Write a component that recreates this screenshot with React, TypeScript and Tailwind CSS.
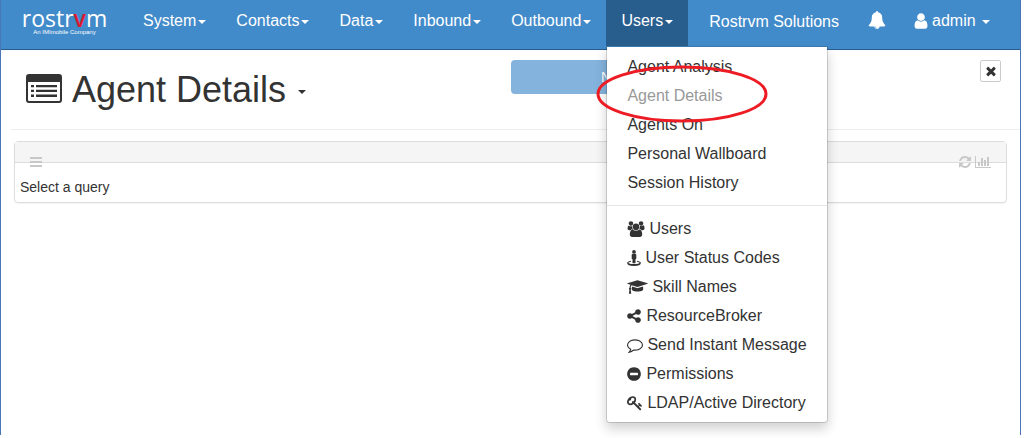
import type { ReactNode } from "react";

type Glyph = { w: number; d: string };

const glyphs: Record<string, Glyph> = {
  bell: {
    w: 1792,
    d: "M912 1696q0-16-16-16-59 0-101.5-42.5t-42.5-101.5q0-16-16-16t-16 16q0 73 51.5 124.5t124.5 51.5q16 0 16-16zm816-288q0 52-38 90t-90 38h-448q0 106-75 181t-181 75-181-75-75-181h-448q-52 0-90-38t-38-90q50-42 91-88t85-119.5 74.5-158.5 50-206 19.5-260q0-152 117-282.5t307-158.5q-8-19-8-39 0-40 28-68t68-28 68 28 28 68q0 20-8 39 190 28 307 158.5t117 282.5q0 139 19.5 260t50 206 74.5 158.5 85 119.5 91 88z",
  },
  user: {
    w: 1792,
    d: "M1536 1399q0 109-62.5 187t-150.5 78h-854q-88 0-150.5-78t-62.5-187q0-85 8.5-160.5t31.5-152 58.5-131 94-89 134.5-34.5q131 128 313 128t313-128q76 0 134.5 34.5t94 89 58.5 131 31.5 152 8.5 160.5zm-256-887q0 159-112.5 271.5t-271.5 112.5-271.5-112.5-112.5-271.5 112.5-271.5 271.5-112.5 271.5 112.5 112.5 271.5z",
  },
  users: {
    w: 2048,
    d: "M657 896q-162 5-265 128h-134q-82 0-138-40.5t-56-118.5q0-353 124-353 6 0 43.5 21t97.5 42.5 119 21.5q67 0 133-23-5 37-5 66 0 159 93 293zm1071 637q0 120-73 189.5t-194 69.5h-874q-121 0-194-69.5t-73-189.5q0-53 3.5-103.5t14-109 26.5-108.5 43-97.5 62-81 85.5-53.5 111.5-20q10 0 43 21.5t73 48 107 48 135 21.5 135-21.5 107-48 73-48 43-21.5q61 0 111.5 20t85.5 53.5 62 81 43 97.5 26.5 108.5 14 109 3.5 103.5zm-1024-1277q0 106-75 181t-181 75-181-75-75-181 75-181 181-75 181 75 75 181zm704 384q0 159-112.5 271.5t-271.5 112.5-271.5-112.5-112.5-271.5 112.5-271.5 271.5-112.5 271.5 112.5 112.5 271.5zm576 225q0 78-56 118.5t-138 40.5h-134q-103-123-265-128 93-134 93-293 0-29-5-66 66 23 133 23 59 0 119-21.5t97.5-42.5 43.5-21q124 0 124 353zm-128-609q0 106-75 181t-181 75-181-75-75-181 75-181 181-75 181 75 75 181z",
  },
  streetView: {
    w: 1536,
    d: "M768 0a210 210 0 0 1 0 420a210 210 0 0 1 0-420zM600 450h336q90 0 90 90v400q0 60-60 60h-30v420q0 60-60 60h-216q-60 0-60-60v-420h-30q-60 0-60-60v-400q0-90 90-90zM420 1190l20 120q-260 50-310 110 60 150 638 150t638-150q-50-60-310-110l20-120q420 80 420 235 0 367-768 367t-768-367q0-155 420-235z",
  },
  graduationCap: {
    w: 2304,
    d: "M1774 836l18 316q4 69-82 128t-235 93.5-323 34.5-323-34.5-235-93.5-82-128l18-316 574 181q22 7 48 7t48-7zm530-324q0 23-22 31l-1120 352q-4 1-10 1t-10-1l-652-206q-43 34-71 111.5t-34 178.5q63 36 63 109 0 69-58 107l58 433q2 14-8 25-9 11-24 11h-192q-15 0-24-11-10-11-8-25l58-433q-58-38-58-107 0-73 65-111 11-207 98-330l-333-104q-22-8-22-31t22-31l1120-352q4-1 10-1t10 1l1120 352q22 8 22 31z",
  },
  share: {
    w: 1792,
    d: "M1344 1024q133 0 226.5 93.5t93.5 226.5-93.5 226.5-226.5 93.5-226.5-93.5-93.5-226.5q0-12 2-34l-360-180q-92 86-218 86-133 0-226.5-93.5t-93.5-226.5 93.5-226.5 226.5-93.5q126 0 218 86l360-180q-2-22-2-34 0-133 93.5-226.5t226.5-93.5 226.5 93.5 93.5 226.5-93.5 226.5-226.5 93.5q-126 0-218-86l-360 180q2 22 2 34t-2 34l360 180q92-86 218-86z",
  },
  comment: {
    w: 1792,
    d: "M896 384q-204 0-381.5 69.5t-282 187.5-104.5 255q0 112 71.5 213.5t201.5 175.5l87 50-27 96q-24 91-70 172 152-63 275-171l43-38 57 6q69 8 130 8 204 0 381.5-69.5t282-187.5 104.5-255-104.5-255-282-187.5-381.5-69.5zm896 512q0 174-120 321.5t-326 233-450 85.5q-70 0-145-8-198 175-460 242-49 14-114 22h-5q-15 0-27-10.5t-16-27.5v-1q-3-4-.5-12t2-10 4.5-9.5l6-9 7-8.5 8-9q7-8 31-34.5t34.5-38 31-39.5 32.5-51 27-59 26-76q-157-89-247.5-220t-90.5-281q0-174 120-321.5t326-233 450-85.5 450 85.5 326 233 120 321.5z",
  },
  minus: {
    w: 1792,
    d: "M1344 960v-128q0-26-19-45t-45-19h-768q-26 0-45 19t-19 45v128q0 26 19 45t45 19h768q26 0 45-19t19-45zm320-64q0 209-103 385.5t-279.5 279.5-385.5 103-385.5-103-279.5-279.5-103-385.5 103-385.5 279.5-279.5 385.5-103 385.5 103 279.5 279.5 103 385.5z",
  },
  key: {
    w: 1792,
    d: "M832 512q0-80-56-136t-136-56-136 56-56 136q0 42 19 83-41-19-83-19-80 0-136 56t-56 136 56 136 136 56 136-56 56-136q0-42-19-83 41 19 83 19 80 0 136-56t56-136zm851 704q0 17-49 66t-66 49q-9 0-28.5-16t-36.5-33-38.5-40-24.5-26l-96 96 220 220q28 28 28 68 0 42-39 81t-81 39q-40 0-68-28l-671-671q-176 131-365 131-163 0-265.5-102.5t-102.5-265.5q0-160 95-313t248-248 313-95q163 0 265.5 102.5t102.5 265.5q0 189-131 365l355 355 96-96q-3-3-26-24.5t-40-38.5-33-36.5-16-28.5q0-17 49-66t66-49q13 0 23 10 6 6 46 44.5t82 79.5 86.5 86 73 78 28.5 41z",
  },
  refresh: {
    w: 1792,
    d: "M1639 1056q0 5-1 7-64 268-268 434.5t-478 166.5q-146 0-282.5-55t-243.5-157l-129 129q-19 19-45 19t-45-19-19-45v-448q0-26 19-45t45-19h448q26 0 45 19t19 45-19 45l-137 137q71 66 161 102t187 36q134 0 250-65t186-179q11-17 53-117 8-23 30-23h192q13 0 22.5 9.5t9.5 22.5zm25-800v448q0 26-19 45t-45 19h-448q-26 0-45-19t-19-45 19-45l138-138q-148-137-349-137-134 0-250 65t-186 179q-11 17-53 117-8 23-30 23h-199q-13 0-22.5-9.5t-9.5-22.5v-7q65-268 270-434.5t480-166.5q146 0 284 55.5t245 156.5l130-129q19-19 45-19t45 19 19 45z",
  },
  chart: {
    w: 2048,
    d: "M640 896v512h-256v-512h256zm384-512v1024h-256v-1024h256zm1024 1152v128h-2048v-1536h128v1408h1920zm-640-896v768h-256v-768h256zm384-384v1152h-256v-1152h256z",
  },
  times: {
    w: 1792,
    d: "M1490 1322q0 40-28 68l-136 136q-28 28-68 28t-68-28l-294-294-294 294q-28 28-68 28t-68-28l-136-136q-28-28-28-68t28-68l294-294-294-294q-28-28-28-68t28-68l136-136q28-28 68-28t68 28l294 294 294-294q28-28 68-28t68 28l136 136q28 28 28 68t-28 68l-294 294 294 294q28 28 28 68z",
  },
};

function Icon({ name, className }: { name: string; className: string }) {
  const g = glyphs[name];
  return (
    <svg viewBox={`0 0 ${g.w} 1792`} className={`shrink-0 fill-current ${className}`} aria-hidden="true">
      <path d={g.d} />
    </svg>
  );
}

function Caret() {
  return (
    <svg viewBox="0 0 8 4" className="mt-0.5 w-2 h-1 shrink-0 fill-current" aria-hidden="true">
      <path d="M0 0h8L4 4z" />
    </svg>
  );
}

const reports = [
  { label: "Agent Analysis" },
  { label: "Agent Details", current: true },
  { label: "Agents On" },
  { label: "Personal Wallboard" },
  { label: "Session History" },
];

const admin = [
  { label: "Users", icon: "users", size: "w-[18px] h-4" },
  { label: "User Status Codes", icon: "streetView", size: "w-[14px] h-4" },
  { label: "Skill Names", icon: "graduationCap", size: "w-[21px] h-4" },
  { label: "ResourceBroker", icon: "share", size: "w-4 h-4 -ml-px" },
  { label: "Send Instant Message", icon: "comment", size: "w-4 h-4" },
  { label: "Permissions", icon: "minus", size: "w-4 h-4 -ml-px" },
  { label: "LDAP/Active Directory", icon: "key", size: "w-4 h-4" },
];

function MenuLink({ children, current }: { children: ReactNode; current?: boolean }) {
  return (
    <a
      href="#"
      className={`flex items-center gap-1 px-5 py-[3px] leading-[23px] whitespace-nowrap ${current ? "text-[#999]" : "text-[#333]"}`}
    >
      {children}
    </a>
  );
}

function UsersMenu() {
  return (
    <div className="absolute left-0 top-full z-10 w-[222px] rounded-b border border-black/15 border-t-[#3a7ab3] bg-white bg-clip-padding py-[5px] shadow-[0_6px_12px_rgba(0,0,0,0.18)]">
      <ul>
        {reports.map((r) => (
          <li key={r.label} className="relative">
            <MenuLink current={r.current}>{r.label}</MenuLink>
            {r.current && (
              <svg
                viewBox="0 0 172 58"
                className="absolute -left-[11px] -top-4 z-10 w-[172px] h-[58px] pointer-events-none"
                aria-hidden="true"
              >
                <ellipse cx="86" cy="29" rx="84" ry="27" fill="none" stroke="#ed1c24" strokeWidth="3" />
              </svg>
            )}
          </li>
        ))}
      </ul>
      <hr className="my-2 border-[#e5e5e5]" />
      <ul>
        {admin.map((a) => (
          <li key={a.label}>
            <MenuLink>
              <Icon name={a.icon} className={a.size} />
              {a.label}
            </MenuLink>
          </li>
        ))}
      </ul>
    </div>
  );
}

function Navbar() {
  return (
    <nav className="flex items-start h-[50px] border-b border-[#285e8e] bg-[#428bca] text-white">
      <a href="#" className="flex flex-col items-center w-[83px] ml-[22px] mr-[22px] pt-2">
        <span className="font-['Open_Sans',sans-serif] text-[23px] leading-5">
          rostr<span className="font-semibold text-[#e0182d]">v</span>m
        </span>
        <span className="text-[6px] leading-[8px] whitespace-nowrap">An IMImobile Company</span>
      </a>
      {["System", "Contacts", "Data", "Inbound", "Outbound"].map((label) => (
        <button key={label} type="button" className="flex items-center gap-0.5 h-[46px] px-[15px] pb-[5px]">
          {label}
          <Caret />
        </button>
      ))}
      <div className="relative">
        <button
          type="button"
          aria-expanded="true"
          className="flex items-center gap-0.5 h-[46px] px-[15px] pb-[5px] bg-[#285e8e]"
        >
          Users
          <Caret />
        </button>
        <UsersMenu />
      </div>
      <span className="ml-[21px] pt-[10px] whitespace-nowrap">Rostrvm Solutions</span>
      <button type="button" aria-label="Notifications" className="ml-[29px] pt-[11px]">
        <Icon name="bell" className="w-[18px] h-[18px]" />
      </button>
      <button type="button" className="flex items-center gap-0.5 h-[46px] ml-[26px] pb-[5px]">
        <Icon name="user" className="w-[18px] h-[18px]" />
        admin
        <span className="ml-1">
          <Caret />
        </span>
      </button>
    </nav>
  );
}

function ListIcon() {
  return (
    <svg viewBox="0 0 36 30" className="mb-0.5 w-9 h-[30px] fill-current" aria-hidden="true">
      <path fillRule="evenodd" d="M3 0h30a3 3 0 0 1 3 3v23a3 3 0 0 1-3 3H3a3 3 0 0 1-3-3V3a3 3 0 0 1 3-3zM2 8v18q0 1 1 1h30q1 0 1-1V8z" />
      <path d="M5 11h3v2.3H5zM10 11h21v2.3H10zM5 15.7h3V18H5zM10 15.7h21V18H10zM5 20.6h3v2.3H5zM10 20.6h21v2.3H10z" />
    </svg>
  );
}

export default function App() {
  return (
    <div className="h-screen bg-white pr-[5px] pb-[3px] font-['Liberation_Sans',Arial,sans-serif] text-base text-[#333]">
      <div className="h-full border-x border-[#4a76b8]">
        <Navbar />
        <header className="relative flex items-center h-20 ml-[10px] pl-[15px] border-b border-[#eee]">
          <ListIcon />
          <h1 className="ml-[10px] text-[36px] leading-10">Agent Details</h1>
          <button type="button" aria-label="Page options" className="ml-3 pt-0.5">
            <Caret />
          </button>
          <button
            type="button"
            disabled
            className="absolute left-[500px] top-[10px] w-[250px] h-[34px] rounded bg-[#84b3dd] text-sm text-white"
          >
            New Query
          </button>
          <button
            type="button"
            aria-label="Close"
            className="flex items-center justify-center w-[21px] h-[22px] ml-auto mr-[19px] mb-[38px] rounded-xs border border-[#ccc]"
          >
            <Icon name="times" className="w-[14px] h-[14px]" />
          </button>
        </header>
        <section className="mt-[11px] mx-[13px] rounded border border-[#ddd] shadow-[0_1px_1px_rgba(0,0,0,0.05)]">
          <div className="flex items-end justify-between h-[21px] px-[15px] border-b border-[#ddd] bg-[#f5f5f5] text-[#c8c8c8]">
            <svg viewBox="0 0 12 10" className="w-3 h-[10px] -mb-[5px] fill-current" aria-hidden="true">
              <path d="M0 0h12v2H0zM0 4h12v2H0zM0 8h12v2H0z" />
            </svg>
            <div className="flex gap-[3px] -mb-[7px]">
              <button type="button" aria-label="Refresh">
                <Icon name="refresh" className="w-[14px] h-[14px]" />
              </button>
              <button type="button" aria-label="Chart">
                <Icon name="chart" className="w-4 h-[14px]" />
              </button>
            </div>
          </div>
          <p className="px-[5px] pt-[14px] pb-[5px] text-sm">Select a query</p>
        </section>
      </div>
    </div>
  );
}
